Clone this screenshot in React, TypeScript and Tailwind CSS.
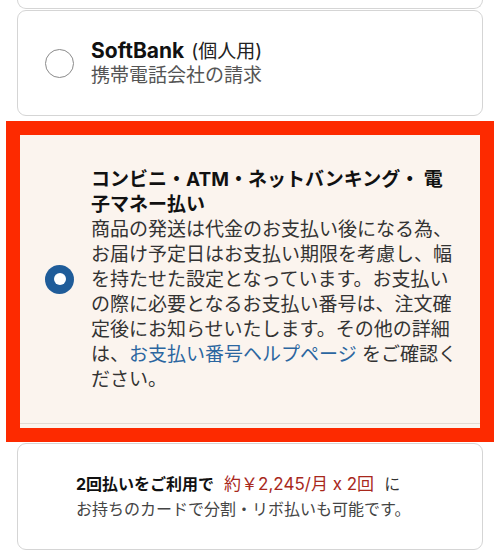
import React from 'react';

const font = { fontFamily: 'Inter, "Noto Sans CJK JP", sans-serif' };

function Radio({ checked }: { checked?: boolean }) {
  if (checked) {
    return (
      <div className="w-[29px] h-[29px] shrink-0 rounded-full bg-[#1f5c99] flex items-center justify-center">
        <div className="w-[12px] h-[12px] rounded-full bg-white" />
      </div>
    );
  }
  return <div className="w-[29px] h-[29px] shrink-0 rounded-full border border-[#8a8a8a] bg-white" />;
}

const bodyLines = [
  '商品の発送は代金のお支払い後になる為、',
  'お届け予定日はお支払い期限を考慮し、幅',
  'を持たせた設定となっています。お支払い',
  'の際に必要となるお支払い番号は、注文確',
  '定後にお知らせいたします。その他の詳細',
];

export default function App() {
  return (
    <div className="w-[500px] h-[552px] bg-white overflow-hidden text-[#111]" style={font}>
      {/* tail of the previous option */}
      <div className="mx-[17px] h-[9px] border border-t-0 border-[#d5d5d5] rounded-b-[9px]" />

      {/* SoftBank */}
      <div className="mx-[17px] mt-[1px] h-[106px] border border-[#d5d5d5] rounded-[9px] flex items-center pl-[27px]">
        <Radio />
        <div className="ml-[17px] leading-[24px] text-[19px]">
          <div>
            <span className="font-bold text-[21px]">SoftBank</span>
            <span className="text-[#222] ml-[7px]">(個人用)</span>
          </div>
          <div className="text-[#555]">携帯電話会社の請求</div>
        </div>
      </div>

      {/* selected option */}
      <div className="mx-[6px] mt-[5px] h-[321px] border-[14px] border-[#fd2a00] bg-[#fbf4ee]">
        <div className="h-[289px] border-b border-[#e2dad3] flex items-center pl-[25px] pr-[16px]">
          <Radio checked />
          <div className="ml-[17px] text-[19px] leading-[25px] whitespace-nowrap">
            <div className="font-bold text-[#111]">
              <div>コンビニ・ATM・ネットバンキング・ 電</div>
              <div>子マネー払い</div>
            </div>
            <div className="text-[#333]">
              {bodyLines.map((l) => (
                <div key={l}>{l}</div>
              ))}
              <div>
                は、<span className="text-[#2b66a0]">お支払い番号ヘルプページ</span> をご確認く
              </div>
              <div>ださい。</div>
            </div>
          </div>
        </div>
      </div>

      {/* installment note */}
      <div className="mx-[17px] mt-[1px] h-[107px] border border-[#d5d5d5] rounded-[9px] flex flex-col justify-center pl-[58px] text-[16px] leading-[25px]">
        <div className="whitespace-nowrap">
          <span className="font-bold text-[#111]">2回払いをご利用で</span>
          <span className="text-[#a8281c] text-[17px] ml-[10px] mr-[10px]">約￥2,245/月 x 2回</span>
          <span className="text-[#333]">に</span>
        </div>
        <div className="text-[#444]">お持ちのカードで分割・リボ払いも可能です。</div>
      </div>
    </div>
  );
}
